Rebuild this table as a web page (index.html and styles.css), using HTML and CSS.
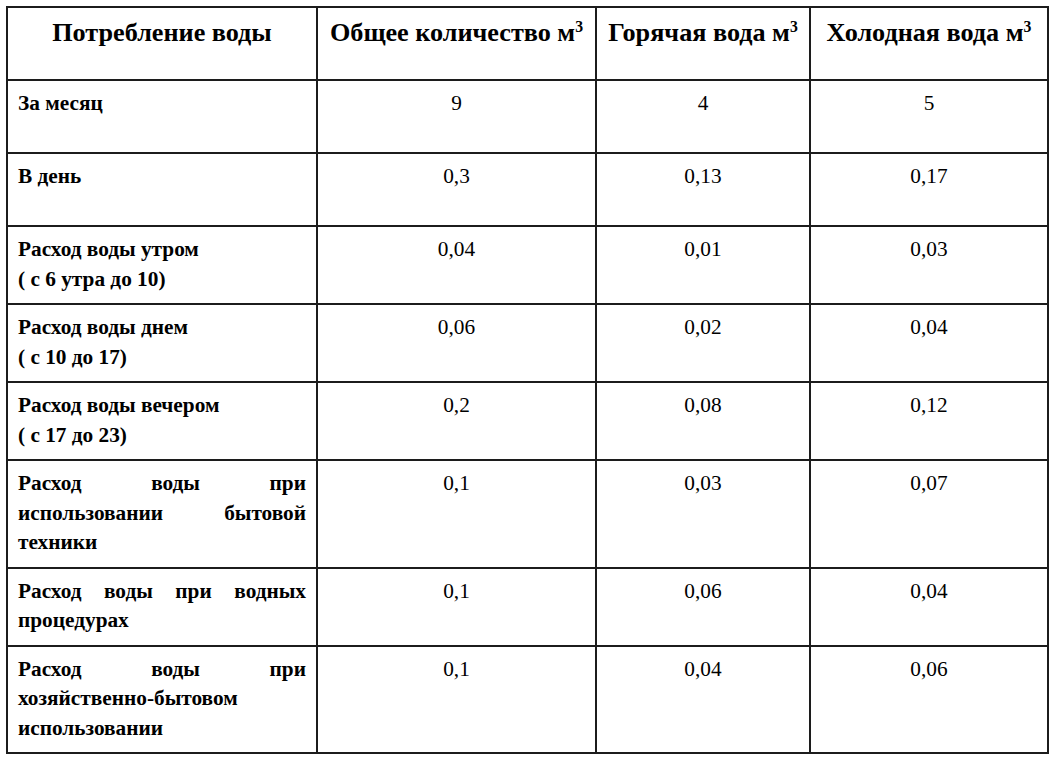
FILE: index.html
```html
<!DOCTYPE html>
<html lang="ru">
<head>
<meta charset="utf-8">
<title>Потребление воды</title>
<link rel="stylesheet" href="styles.css">
</head>
<body>
<div class="wrap">
<table class="water">
  <colgroup>
    <col class="c1"><col class="c2"><col class="c3"><col class="c4">
  </colgroup>
  <thead>
    <tr class="r1">
      <th>Потребление воды</th>
      <th>Общее количество м<sup>3</sup></th>
      <th>Горячая вода м<sup>3</sup></th>
      <th>Холодная вода м<sup>3</sup></th>
    </tr>
  </thead>
  <tbody>
    <tr class="r1"><td class="label">За месяц</td><td>9</td><td>4</td><td>5</td></tr>
    <tr class="r1"><td class="label">В день</td><td>0,3</td><td>0,13</td><td>0,17</td></tr>
    <tr><td class="label">Расход воды утром<br>( с 6 утра до 10)</td><td>0,04</td><td>0,01</td><td>0,03</td></tr>
    <tr><td class="label">Расход воды днем<br>( с 10 до 17)</td><td>0,06</td><td>0,02</td><td>0,04</td></tr>
    <tr><td class="label">Расход воды вечером<br>( с 17 до 23)</td><td>0,2</td><td>0,08</td><td>0,12</td></tr>
    <tr><td class="label just">Расход воды при использовании бытовой техники</td><td>0,1</td><td>0,03</td><td>0,07</td></tr>
    <tr><td class="label just">Расход воды при водных процедурах</td><td>0,1</td><td>0,06</td><td>0,04</td></tr>
    <tr><td class="label just">Расход воды при <span class="nw">хозяйственно-бытовом</span> использовании</td><td>0,1</td><td>0,04</td><td>0,06</td></tr>
  </tbody>
</table>
</div>
</body>
</html>
```
FILE: styles.css
```css
html, body {
  margin: 0;
  padding: 0;
  background: #ffffff;
}
.wrap {
  padding: 6px;
}
.water {
  border-collapse: collapse;
  table-layout: fixed;
  width: 1041px;
  font-family: "Liberation Serif", "Times New Roman", serif;
  color: #000;
}
.c1 { width: 310px; }
.c2 { width: 279px; }
.c3 { width: 214px; }
.c4 { width: 238px; }
.water th, .water td {
  border: 2px solid #1c1c1c;
  vertical-align: top;
  padding: 8px 10px 9px;
  text-align: center;
}
.water th {
  font-size: 26.2px;
  line-height: 32px;
  font-weight: bold;
  padding-top: 9px;
  padding-bottom: 8px;
}
.water td {
  font-size: 21.3px;
  line-height: 29.5px;
  font-weight: normal;
}
.water td.label {
  text-align: left;
  font-weight: bold;
}
.water td.just {
  text-align: justify;
}
.nw {
  white-space: nowrap;
}
.water sup {
  font-size: 0.6em;
  line-height: 0;
  vertical-align: 0.6em;
}
.r1 th, .r1 td {
  height: 54px;
}
```
